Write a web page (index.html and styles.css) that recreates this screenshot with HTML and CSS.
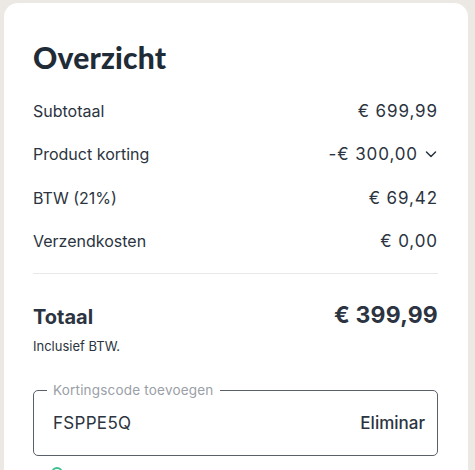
FILE: index.html
```html
<!DOCTYPE html>
<html lang="nl">
<head>
<meta charset="utf-8">
<title>Overzicht</title>
<link rel="stylesheet" href="styles.css">
</head>
<body>
<section class="card">
  <h1 class="title">Overzicht</h1>
  <div class="rows">
    <div class="row"><span class="label">Subtotaal</span><span class="value">€ 699,99</span></div>
    <div class="row"><span class="label">Product korting</span><span class="value">-€ 300,00 <svg class="chev" width="14" height="14" viewBox="0 0 14 14"><path d="M2.5 5l4.5 4.5L11.5 5" fill="none" stroke="#2b3440" stroke-width="1.5" stroke-linecap="round" stroke-linejoin="round"/></svg></span></div>
    <div class="row"><span class="label">BTW (21%)</span><span class="value">€ 69,42</span></div>
    <div class="row"><span class="label">Verzendkosten</span><span class="value">€ 0,00</span></div>
  </div>
  <hr class="divider">
  <div class="total">
    <span class="total-label">Totaal</span>
    <span class="total-value">€ 399,99</span>
  </div>
  <div class="incl">Inclusief BTW.</div>
  <fieldset class="code">
    <legend class="code-legend">Kortingscode toevoegen</legend>
    <span class="code-value">FSPPE5Q</span>
    <span class="code-action">Eliminar</span>
  </fieldset>
  <div class="status"><span class="dot"></span></div>
</section>
</body>
</html>
```
FILE: styles.css
```css
html, body {
  margin: 0;
  padding: 0;
  background: #ece9e4;
  height: 100%;
  overflow: hidden;
}
body {
  font-family: "Inter", "Liberation Sans", sans-serif;
  color: #2b3440;
  padding: 3px 0 0 4px;
}
.card {
  width: 464px;
  background: #ffffff;
  border-radius: 14px;
  padding: 37px 30px 40px 29px;
  box-sizing: border-box;
  height: 600px;
}
.title {
  margin: 0;
  font-family: "Lato", sans-serif;
  font-weight: 900;
  font-size: 30px;
  line-height: 34px;
  color: #1f2b36;
  letter-spacing: 0.2px;
}
.rows {
  margin-top: 15px;
  display: flex;
  flex-direction: column;
}
.row {
  display: flex;
  justify-content: space-between;
  align-items: center;
  height: 43.5px;
}
.label {
  font-size: 16px;
}
.value {
  font-size: 17px;
  letter-spacing: 0.9px;
  display: flex;
  align-items: center;
  gap: 6px;
}
.chev {
  display: block;
}
.divider {
  border: none;
  border-top: 1px solid #e8e8e8;
  margin: 10px 0 0 0;
}
.total {
  margin-top: 27px;
  display: flex;
  justify-content: space-between;
  align-items: flex-end;
}
.total-label {
  font-size: 20px;
  font-weight: 700;
  line-height: 24px;
}
.total-value {
  font-size: 23px;
  font-weight: 700;
  line-height: 28px;
  letter-spacing: 0.2px;
}
.incl {
  font-size: 13px;
  margin-top: 9px;
}
.code {
  margin: 28px 0 0 0;
  border: 1.5px solid #5a6068;
  border-radius: 5px;
  padding: 0 12px 0 19px;
  height: 74px;
  box-sizing: border-box;
  display: flex;
  align-items: center;
  justify-content: space-between;
  min-width: 0;
}
.code-legend {
  font-size: 13.5px;
  color: #9aa0a6;
  padding: 0 6px;
  margin-left: -6px;
  letter-spacing: 0.2px;
}
.code-value {
  font-size: 17px;
  letter-spacing: 0.3px;
  margin-top: -8px;
}
.code-action {
  font-size: 17px;
  font-weight: 500;
  margin-top: -8px;
}
.status {
  padding: 11px 0 0 18px;
}
.dot {
  display: block;
  width: 12px;
  height: 12px;
  border-radius: 50%;
  border: 2px solid #3fbf8f;
  box-sizing: border-box;
}
```
